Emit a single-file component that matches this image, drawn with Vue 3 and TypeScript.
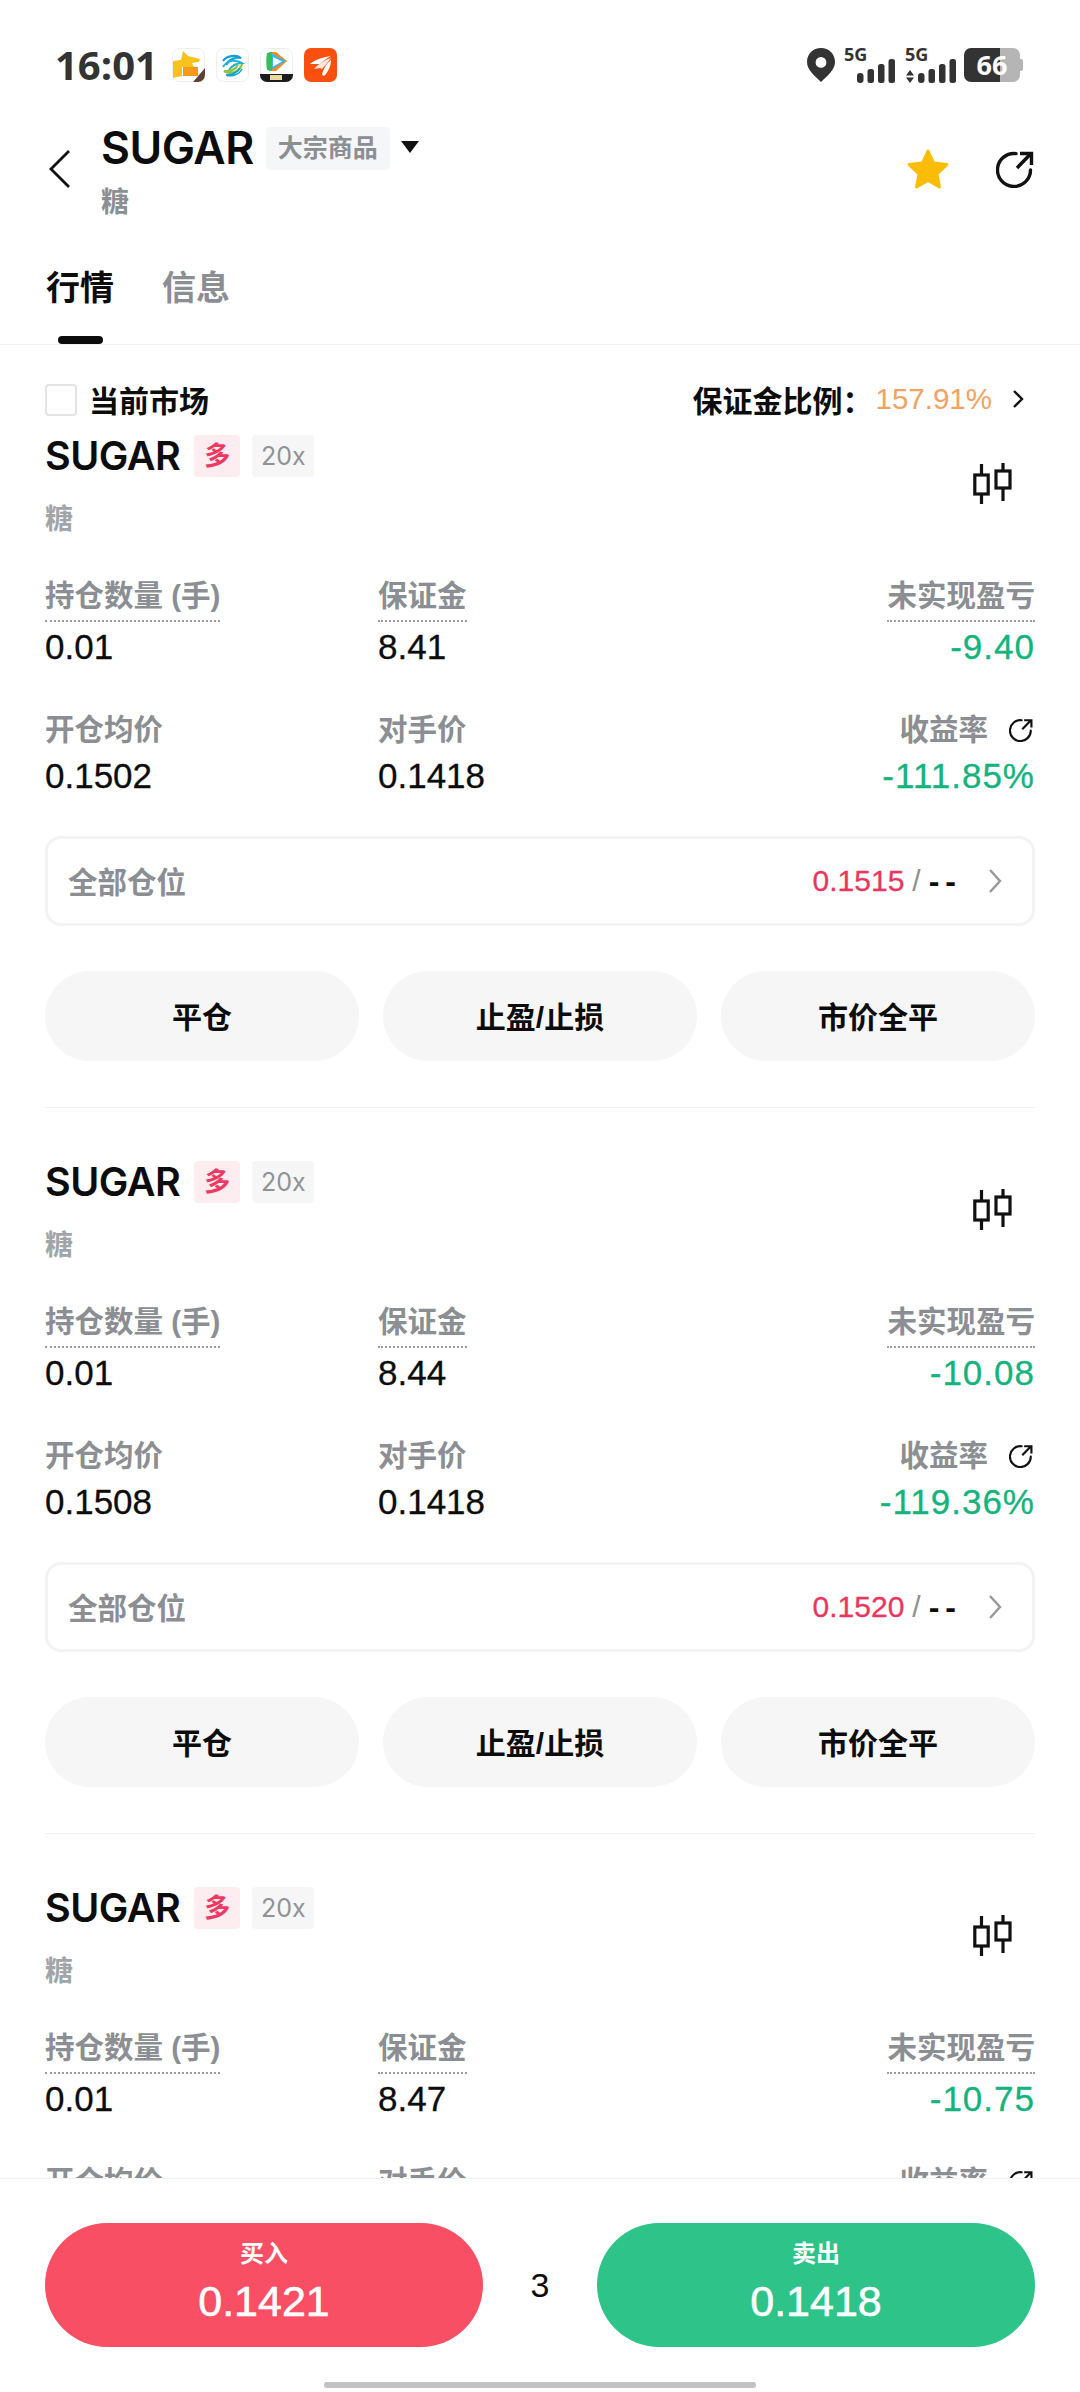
<template>
  <div class="page">
    <!-- 状态栏 -->
    <div class="status-bar">
      <span class="clock">16:01</span>
      <div class="app-icons">
        <svg class="app-icon" viewBox="0 0 33 34">
          <rect x="0.5" y="0.5" width="32" height="33" rx="7" fill="#fff" stroke="#eee"/>
          <path d="M1 13 L9 12 L11 3 L16 8 L28 11 L27 14 L20 15 L22 19 L10 19 L10 28 L1 30Z" fill="#fbc11d"/>
          <rect x="11" y="19" width="15" height="9" fill="#f39a1c"/>
          <path d="M33 20 V27 A7 7 0 0 1 26 34 H21 Z" fill="#5c4235"/>
        </svg>
        <svg class="app-icon" viewBox="0 0 33 34">
          <rect x="0.5" y="0.5" width="32" height="33" rx="7" fill="#fff" stroke="#eee"/>
          <path d="M7 13 C10 8 20 6 25 10 C20 9 13 11 10 17" fill="none" stroke="#16a0d8" stroke-width="2.2"/>
          <path d="M7 19 C11 12 20 11 26 15 C21 15 15 18 13 22" fill="none" stroke="#23aee0" stroke-width="2"/>
          <path d="M26 16 C24 24 14 27 8 23 C14 24 20 21 22 17" fill="none" stroke="#8cc63f" stroke-width="2.2"/>
          <path d="M26 21 C23 27 15 29 10 27 C16 27 21 25 24 20" fill="none" stroke="#16a0d8" stroke-width="1.6"/>
        </svg>
        <svg class="app-icon" viewBox="0 0 33 34">
          <rect x="0.5" y="0.5" width="32" height="33" rx="7" fill="#fff" stroke="#eee"/>
          <path d="M9 4 H16 L27 13 L16 23 H9 Z" fill="#ff8a1f"/>
          <path d="M9 4 L26 13 L9 23 Z" fill="#35b8f0"/>
          <path d="M13 9 L22 13.5 L13 18.5 Z" fill="#fff"/>
          <path d="M7 5 C6 10 6 17 7 22 L12 23 V4Z" fill="#36c05c"/>
          <path d="M0 26 H33 V27 A7 7 0 0 1 26 34 H7 A7 7 0 0 1 0 27Z" fill="#1c1c1c"/>
          <rect x="10" y="27" width="12" height="5" fill="#e9d9a0"/>
        </svg>
        <svg class="app-icon" viewBox="0 0 33 34">
          <rect width="33" height="34" rx="7" fill="#f9500f"/>
          <path d="M6 16 C12 11 20 9 27 8 C23 10 19 13 16 16 Z" fill="#fff"/>
          <path d="M10 21 C14 16 21 12 27 10 C24 14 21 18 18 21 L16 20 Z" fill="#ffe7dc"/>
          <path d="M18 27 C19 21 23 15 27 12 C27 18 24 24 20 28 Z" fill="#fff"/>
        </svg>
      </div>
      <div class="status-right">
        <svg class="pin" viewBox="0 0 28 34">
          <path fill-rule="evenodd" d="M14 0 C22 0 28 6 28 14 C28 22 20 28 14 34 C8 28 0 22 0 14 C0 6 6 0 14 0Z M14 9 A5.4 5.4 0 1 0 14 19.8 A5.4 5.4 0 1 0 14 9Z" fill="#333"/>
        </svg>
        <div class="signal">
          <span class="net">5G</span>
          <svg class="bars" viewBox="0 0 52 24">
            <rect x="13" y="14" width="6.5" height="10" rx="3" fill="#333"/>
            <rect x="23.5" y="10" width="6.5" height="14" rx="2.5" fill="#333"/>
            <rect x="34" y="5" width="6.5" height="19" rx="2.5" fill="#333"/>
            <rect x="44.5" y="0" width="6.5" height="24" rx="2.5" fill="#333"/>
          </svg>
        </div>
        <div class="signal">
          <span class="net">5G</span>
          <svg class="bars" viewBox="0 0 52 24">
            <path d="M5 11 L9 16.5 H1Z M1 18.5 H9 L5 24Z" fill="#333"/>
            <rect x="13" y="14" width="6.5" height="10" rx="3" fill="#333"/>
            <rect x="23.5" y="10" width="6.5" height="14" rx="2.5" fill="#333"/>
            <rect x="34" y="5" width="6.5" height="19" rx="2.5" fill="#333"/>
            <rect x="44.5" y="0" width="6.5" height="24" rx="2.5" fill="#333"/>
          </svg>
        </div>
        <div class="battery">66</div>
      </div>
    </div>

    <!-- 标题栏 -->
    <div class="nav">
      <svg class="back" viewBox="0 0 24 40">
        <path d="M21 2 L3 20 L21 38" fill="none" stroke="#111" stroke-width="2.8"/>
      </svg>
      <div class="nav-title">
        <div class="nav-line">
          <span class="symbol">SUGAR</span>
          <span class="market-tag">大宗商品</span>
          <span class="caret"></span>
        </div>
        <div class="nav-sub">糖</div>
      </div>
      <div class="nav-actions">
        <svg class="star" viewBox="0 0 44 42">
          <path d="M22 3 L27.5 15 L41 16.5 L31 26 L33.5 39 L22 32.5 L10.5 39 L13 26 L3 16.5 L16.5 15Z" fill="#fbbc05" stroke="#fbbc05" stroke-width="3" stroke-linejoin="round"/>
        </svg>
        <svg class="share" viewBox="0 0 38 38">
          <path d="M20 3.6 A16.5 16.5 0 1 0 34.5 20" fill="none" stroke="#111" stroke-width="3.4" stroke-linecap="round"/>
          <path d="M21 18 L34 4.5 M24 3.5 H35.5 V15" fill="none" stroke="#111" stroke-width="3.4"/>
        </svg>
      </div>
    </div>

    <!-- 标签 -->
    <div class="tabs">
      <div class="tab tab--active">
        <span>行情</span>
        <i class="tab-bar"></i>
      </div>
      <div class="tab">
        <span>信息</span>
      </div>
    </div>

    <!-- 持仓列表 -->
    <div class="list">
      <div class="market-row">
        <div class="market-left">
          <span class="checkbox"></span>
          <span>当前市场</span>
        </div>
        <div class="market-right">
          <span>保证金比例：</span>
          <span class="ratio">157.91%</span>
          <svg class="ratio-arrow" viewBox="0 0 12 20">
            <path d="M2 2 L10 10 L2 18" fill="none" stroke="#111" stroke-width="2.4"/>
          </svg>
        </div>
      </div>

      <div v-for="p in positions" :key="p.margin" class="position">
        <div class="pos-head">
          <div>
            <div class="pos-line">
              <span class="pos-symbol">SUGAR</span>
              <span class="tag tag--long">多</span>
              <span class="tag tag--lev">20x</span>
            </div>
            <div class="pos-sub">糖</div>
          </div>
          <svg class="candle" viewBox="0 0 40 44">
            <path d="M8.5 2 V13 M8.5 32 V42 M30 1 V9 M30 26 V39" stroke="#111" stroke-width="3.2" fill="none"/>
            <rect x="1.8" y="13" width="13.4" height="19" fill="none" stroke="#111" stroke-width="3.2"/>
            <rect x="23" y="9" width="14" height="17" fill="none" stroke="#111" stroke-width="3.2"/>
          </svg>
        </div>

        <div class="stats">
          <div class="stat">
            <span class="label label--dotted">持仓数量 (手)</span>
            <span class="value">0.01</span>
          </div>
          <div class="stat">
            <span class="label label--dotted">保证金</span>
            <span class="value">{{ p.margin }}</span>
          </div>
          <div class="stat stat--right">
            <span class="label label--dotted">未实现盈亏</span>
            <span class="value value--down">{{ p.pnl }}</span>
          </div>
          <div class="stat">
            <span class="label">开仓均价</span>
            <span class="value">{{ p.open }}</span>
          </div>
          <div class="stat">
            <span class="label">对手价</span>
            <span class="value">0.1418</span>
          </div>
          <div class="stat stat--right">
            <span class="label">
              <span>收益率</span>
              <svg class="share-small" viewBox="0 0 38 38">
                <path d="M20 3.6 A16.5 16.5 0 1 0 34.5 20" fill="none" stroke="#111" stroke-width="3.4" stroke-linecap="round"/>
                <path d="M21 18 L34 4.5 M24 3.5 H35.5 V15" fill="none" stroke="#111" stroke-width="3.4"/>
              </svg>
            </span>
            <span class="value value--down">{{ p.rate }}</span>
          </div>
        </div>

        <div class="all-box">
          <span class="all-label">全部仓位</span>
          <div class="all-right">
            <span class="all-price">{{ p.liq }}</span>
            <span class="all-slash">/</span>
            <span class="all-dash">--</span>
            <svg class="all-arrow" viewBox="0 0 14 26">
              <path d="M2 2 L12 13 L2 24" fill="none" stroke="#999" stroke-width="2.4"/>
            </svg>
          </div>
        </div>

        <div class="actions">
          <button class="action">平仓</button>
          <button class="action">止盈/止损</button>
          <button class="action">市价全平</button>
        </div>
      </div>
    </div>

    <!-- 底部买卖 -->
    <div class="footer">
      <div class="trade">
        <button class="trade-btn trade-btn--buy">
          <span class="trade-label">买入</span>
          <span class="trade-price">0.1421</span>
        </button>
        <span class="count">3</span>
        <button class="trade-btn trade-btn--sell">
          <span class="trade-label">卖出</span>
          <span class="trade-price">0.1418</span>
        </button>
      </div>
      <div class="home-bar"></div>
    </div>
  </div>
</template>

<script setup lang="ts">
interface Position {
  margin: string
  pnl: string
  open: string
  rate: string
  liq: string
}

const positions: Position[] = [
  { margin: '8.41', pnl: '-9.40', open: '0.1502', rate: '-111.85%', liq: '0.1515' },
  { margin: '8.44', pnl: '-10.08', open: '0.1508', rate: '-119.36%', liq: '0.1520' },
  { margin: '8.47', pnl: '-10.75', open: '0.1514', rate: '-126.76%', liq: '0.1525' },
]
</script>

<style>
html,
body {
  margin: 0;
  background: #fff;
}
</style>

<style scoped>
.page {
  width: 1080px;
  height: 2392px;
  display: flex;
  flex-direction: column;
  overflow: hidden;
  background: #fff;
  color: #0c0c0c;
  font-family: "Liberation Sans", "Noto Sans CJK SC", sans-serif;
}

/* 状态栏 */
.status-bar {
  display: flex;
  align-items: center;
  height: 34px;
  margin-top: 48px;
  padding: 0 60px 0 55px;
}

.clock {
  width: 117px;
  font-family: "Open Sans", sans-serif;
  font-size: 40px;
  font-weight: 700;
  line-height: 34px;
  color: #333;
}

.app-icons {
  display: flex;
  gap: 11px;
}

.app-icon {
  width: 33px;
  height: 34px;
}

.status-right {
  display: flex;
  align-items: center;
  margin-left: auto;
}

.pin {
  width: 28px;
  height: 34px;
  margin-right: 9px;
}

.signal {
  width: 52px;
  height: 36px;
  margin-right: 9px;
}

.net {
  display: block;
  height: 15px;
  font-family: "Open Sans", sans-serif;
  font-size: 18px;
  font-weight: 700;
  line-height: 15px;
  color: #333;
}

.bars {
  display: block;
  width: 52px;
  height: 24px;
  margin-top: -3px;
}

.battery {
  position: relative;
  width: 56px;
  height: 34px;
  margin-left: -2px;
  border-radius: 7px;
  background: linear-gradient(90deg, #333 0 64%, #b5b5b5 64%);
  font-family: "Open Sans", sans-serif;
  font-size: 27px;
  font-weight: 700;
  line-height: 34px;
  text-align: center;
  color: #fff;
}

.battery::after {
  content: "";
  position: absolute;
  top: 11px;
  right: -3px;
  width: 3px;
  height: 12px;
  border-radius: 0 2px 2px 0;
  background: #b5b5b5;
}

/* 标题栏 */
.nav {
  display: flex;
  margin-top: 44px;
  padding: 0 46px 0 48px;
}

.back {
  width: 24px;
  height: 40px;
  margin-top: 23px;
  margin-right: 29px;
}

.nav-line {
  display: flex;
  align-items: center;
  height: 44px;
}

.symbol {
  font-family: Inter, sans-serif;
  font-size: 44.5px;
  font-weight: 600;
  line-height: 44px;
  letter-spacing: -0.5px;
}

.market-tag {
  margin-left: 12px;
  padding: 0 12px;
  height: 43px;
  border-radius: 4px;
  background: #f5f6f7;
  font-size: 25px;
  font-weight: 700;
  line-height: 43px;
  color: #8b8e92;
}

.caret {
  margin: -3px 0 0 11px;
  border-style: solid;
  border-width: 12px 9px 0;
  border-color: #111 transparent transparent;
}

.nav-sub {
  margin-top: 13px;
  font-size: 28px;
  font-weight: 700;
  line-height: 40px;
  color: #8b8e92;
}

.nav-actions {
  display: flex;
  align-items: center;
  gap: 46px;
  height: 40px;
  margin: 23px 0 0 auto;
}

.star {
  width: 44px;
  height: 42px;
}

.share {
  width: 38px;
  height: 38px;
}

/* 标签 */
.tabs {
  display: flex;
  gap: 48px;
  height: 122px;
  padding: 43px 0 0 46px;
  box-sizing: border-box;
  border-bottom: 1px solid #f2f2f2;
}

.tab {
  display: flex;
  flex-direction: column;
  align-items: center;
  font-size: 34px;
  font-weight: 700;
  line-height: 44px;
  color: #8b8e92;
}

.tab--active {
  color: #0c0c0c;
}

.tab-bar {
  width: 45px;
  height: 8px;
  margin-top: 26px;
  border-radius: 4px;
  background: #0c0c0c;
}

/* 列表 */
.list {
  flex: 1;
  min-height: 0;
  overflow: hidden;
  padding: 0 45px;
}

.market-row {
  display: flex;
  justify-content: space-between;
  align-items: center;
  height: 32px;
  margin: 38px 0 20px;
  font-size: 30px;
  font-weight: 700;
}

.market-left,
.market-right {
  display: flex;
  align-items: center;
}

.checkbox {
  box-sizing: border-box;
  width: 32px;
  height: 32px;
  margin: 2px 12px 0 0;
  border: 2.5px solid #e2e4e6;
  border-radius: 4px;
}

.ratio {
  margin-left: 3px;
  font-size: 29.5px;
  font-weight: 400;
  color: #f2a262;
}

.ratio-arrow {
  width: 12px;
  height: 20px;
  margin: 0 11px 0 20px;
}

.position {
  padding-bottom: 46px;
}

.position + .position {
  padding-top: 53px;
  border-top: 1px solid #f2f2f2;
}

.pos-head {
  display: flex;
  justify-content: space-between;
  align-items: center;
}

.pos-line {
  display: flex;
  align-items: center;
  height: 42px;
}

.pos-symbol {
  font-family: Inter, sans-serif;
  font-size: 39.5px;
  font-weight: 600;
  line-height: 42px;
  letter-spacing: -0.5px;
}

.tag {
  height: 42px;
  border-radius: 4px;
  font-size: 26px;
  line-height: 42px;
  text-align: center;
}

.tag--long {
  width: 46px;
  margin-left: 14px;
  background: #fdecf0;
  font-weight: 700;
  color: #ee3a62;
}

.tag--lev {
  width: 62px;
  margin-left: 12px;
  background: #f6f6f7;
  font-family: Inter, sans-serif;
  font-size: 25px;
  color: #8f9296;
}

.pos-sub {
  margin-top: 25px;
  font-size: 28px;
  line-height: 36px;
  font-weight: 700;
  color: #a2a5a8;
}

.candle {
  width: 40px;
  height: 44px;
  margin: 0 22px 6px 0;
}

.stats {
  display: grid;
  grid-template-columns: 333px 1fr auto;
  row-gap: 45px;
  margin-top: 40px;
}

.stat {
  display: flex;
  flex-direction: column;
  align-items: flex-start;
}

.stat--right {
  align-items: flex-end;
}

.label {
  display: inline-flex;
  align-items: center;
  height: 36px;
  padding-bottom: 1px;
  border-bottom: 2px solid transparent;
  font-size: 29.5px;
  font-weight: 700;
  line-height: 36px;
  white-space: nowrap;
  color: #8b8e92;
}

.label--dotted {
  padding-bottom: 6px;
  border-bottom: 2px dotted #9a9da0;
}

.share-small {
  width: 24px;
  height: 24px;
  margin: 0 2px 0 21px;
}

.value {
  margin-top: 5px;
  font-size: 35px;
  line-height: 40px;
  -webkit-text-stroke: 0.3px currentColor;
}

.value--down {
  letter-spacing: 1px;
  color: #14b37d;
}

.all-box {
  box-sizing: border-box;
  display: flex;
  justify-content: space-between;
  align-items: center;
  height: 90px;
  margin-top: 40px;
  padding: 0 30px 0 20px;
  border: 3px solid #f3f3f3;
  border-radius: 16px;
}

.all-label {
  margin-bottom: 2px;
  font-size: 29.5px;
  font-weight: 700;
  color: #8b8e92;
}

.all-right {
  display: flex;
  align-items: center;
  font-size: 30px;
}

.all-price {
  color: #e8375f;
  -webkit-text-stroke: 0.3px currentColor;
}

.all-slash {
  margin: 0 8px;
  color: #8b8e92;
}

.all-dash {
  margin-right: -6px;
  font-size: 32px;
  font-weight: 700;
  letter-spacing: 6px;
}

.all-arrow {
  width: 14px;
  height: 26px;
  margin-left: 32px;
}

.actions {
  display: grid;
  grid-template-columns: repeat(3, 1fr);
  gap: 24px;
  margin-top: 45px;
}

.action {
  height: 90px;
  padding: 0 0 3px;
  border: none;
  border-radius: 45px;
  background: #f6f6f6;
  font: inherit;
  font-size: 30px;
  font-weight: 700;
  color: #0c0c0c;
}

/* 底部 */
.footer {
  height: 214px;
  box-sizing: border-box;
  padding: 44px 45px 0;
  border-top: 1px solid #f2f2f2;
  background: #fff;
}

.trade {
  display: flex;
  justify-content: space-between;
  align-items: center;
}

.trade-btn {
  display: flex;
  flex-direction: column;
  align-items: center;
  width: 438px;
  height: 124px;
  padding: 15px 0 0;
  border: none;
  border-radius: 62px;
  font: inherit;
  color: #fff;
}

.trade-btn--buy {
  background: #f94f65;
}

.trade-btn--sell {
  background: #2ec388;
}

.trade-label {
  font-size: 24px;
  font-weight: 700;
  line-height: 32px;
}

.trade-price {
  margin-top: 6px;
  font-size: 43px;
  line-height: 50px;
  -webkit-text-stroke: 0.6px currentColor;
}

.count {
  font-size: 34px;
}

.home-bar {
  width: 432px;
  height: 6px;
  margin: 35px auto 0;
  border-radius: 3px;
  background: #c2c2c2;
}
</style>
